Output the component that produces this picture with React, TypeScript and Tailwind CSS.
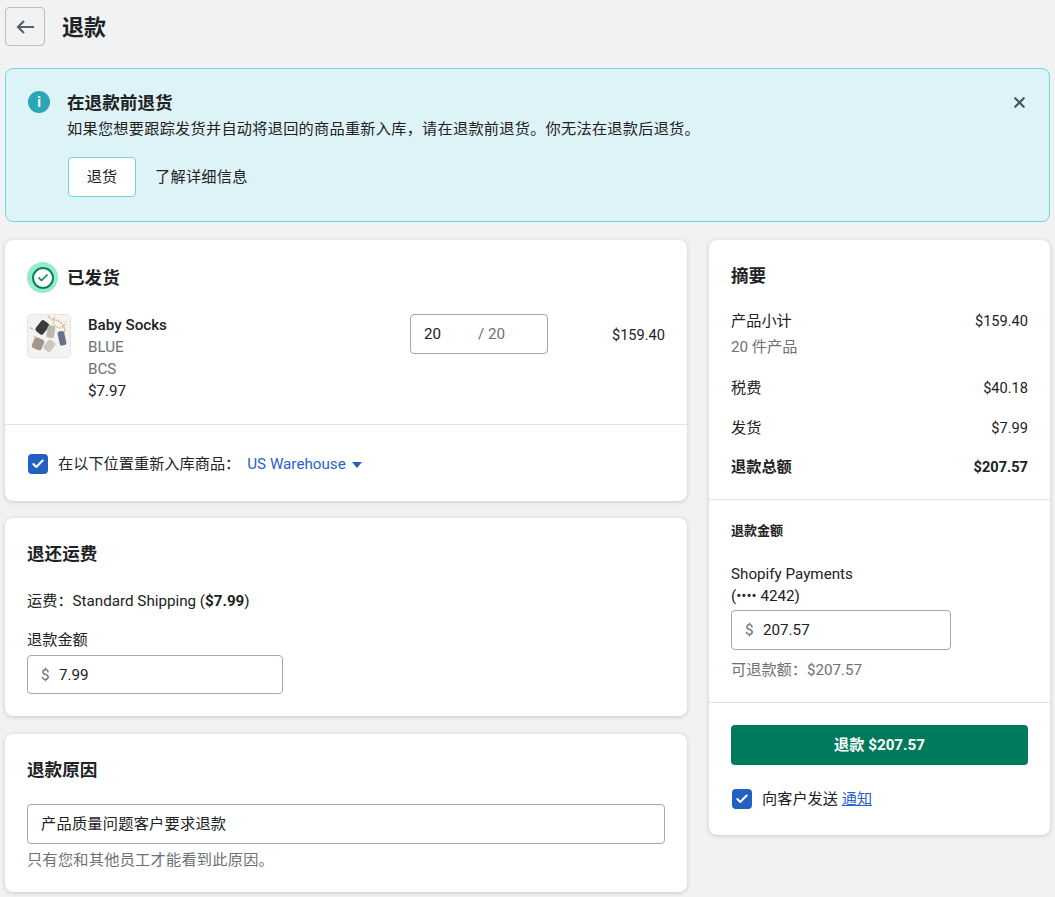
import { Check, X } from 'lucide-react';

const font = '[font-family:Roboto,"Noto_Sans_CJK_SC",sans-serif]';

function Checkbox() {
  return (
    <span className="flex h-5 w-5 shrink-0 items-center justify-center rounded-[4px] bg-[#2360c0]">
      <Check className="h-3.5 w-3.5 text-white" strokeWidth={3.5} />
    </span>
  );
}

function MoneyInput({ value, className }: { value: string; className: string }) {
  return (
    <div className={`flex items-center rounded-[4px] border border-[#a5a7ab] bg-white pl-[13px] ${className}`}>
      <span className="w-[18px] text-[#6a6f85]">$</span>
      <span>{value}</span>
    </div>
  );
}

function SummaryRow({ label, value, bold }: { label: string; value: string; bold?: boolean }) {
  return (
    <div className={`flex items-center justify-between ${bold ? 'font-bold' : ''}`}>
      <span>{label}</span>
      <span className="text-[14.6px]">{value}</span>
    </div>
  );
}

function Thumbnail() {
  return (
    <svg viewBox="0 0 44 44" className="h-11 w-11 shrink-0 rounded-[4px] border border-[#e3e4e6]">
      <rect width="44" height="44" fill="#f4f3f1" />
      <path d="M21 1c4 5 8 3 12 6s7 8 5 12" fill="none" stroke="#dcae80" strokeWidth="1.6" strokeDasharray="2 1" />
      <path d="M28 2c-3 4-2 9 3 11s7-2 9-6" fill="none" stroke="#dfb891" strokeWidth="1.3" strokeDasharray="2 1" />
      <path d="M2 13l3 2M6 22l2 1" stroke="#d9a57a" strokeWidth="1.2" />
      <rect x="10" y="6" width="10" height="14" rx="2.5" transform="rotate(38 15 13)" fill="#3a3b3f" />
      <rect x="20" y="11" width="8" height="13" rx="2" transform="rotate(8 24 17)" fill="#bdb9ac" />
      <rect x="32" y="17" width="7" height="15" rx="2" transform="rotate(-12 35 24)" fill="#67728a" />
      <rect x="5" y="24" width="11" height="12" rx="3" transform="rotate(22 10 30)" fill="#a3978c" />
      <rect x="18" y="26" width="9" height="12" rx="3" transform="rotate(38 22 32)" fill="#cbc8bf" />
    </svg>
  );
}

function ShippedIcon() {
  return (
    <span className="flex h-[31px] w-[31px] items-center justify-center rounded-full bg-[#96ecc8]">
      <span className="flex h-[22px] w-[22px] items-center justify-center rounded-full border-2 border-[#108060] bg-white">
        <Check className="h-3 w-3 text-[#108060]" strokeWidth={3.5} />
      </span>
    </span>
  );
}

export default function App() {
  return (
    <div className={`h-[897px] overflow-hidden bg-[#f1f2f4] pl-[5px] pr-[5px] text-[15.2px] leading-[22px] text-[#202223] ${font}`}>
      {/* Header */}
      <div className="flex items-center gap-[17px] pt-[7px]">
        <button className="flex h-[39px] w-10 items-center justify-center rounded-[4px] border border-[#babfc3] bg-transparent">
          <svg viewBox="0 0 18 14" className="h-[14px] w-[18px] text-[#5c5f62]" fill="none" stroke="currentColor" strokeWidth="2.2">
            <path d="M18 7H2M8 1 2 7l6 6" />
          </svg>
        </button>
        <h1 className="mt-0.5 text-[22px] font-bold leading-7">退款</h1>
      </div>

      {/* Banner */}
      <div className="relative mt-[22px] flex h-[154px] gap-[17px] rounded-lg border border-[#6fd8d8] bg-[#def3f7] pl-[22px] pt-[22px]">
        <span className="flex h-[22px] w-[22px] shrink-0 items-center justify-center rounded-full bg-[#2ba6b8] text-[14px] font-bold leading-none text-white">i</span>
        <div>
          <h2 className="text-[17.6px] font-bold leading-6">在退款前退货</h2>
          <p className="mt-[3px] tracking-[0.25px]">如果您想要跟踪发货并自动将退回的商品重新入库，请在退款前退货。你无法在退款后退货。</p>
          <div className="ml-px mt-[17px] flex items-center gap-[19px]">
            <button className="h-10 w-[68px] rounded-[4px] border border-[#6fd8d8] bg-white">退货</button>
            <span className="tracking-[0.25px]">了解详细信息</span>
          </div>
        </div>
        <X className="absolute right-[21px] top-[25px] h-[17px] w-[17px] text-[#4a5358]" strokeWidth={3} />
      </div>

      <div className="mt-[18px] flex items-start gap-[22px]">
        {/* Left column */}
        <div className="flex w-[682px] shrink-0 flex-col">
          <section className="h-[261px] rounded-lg bg-white shadow-[0_1px_4px_rgba(22,29,37,0.2)]">
            <div className="h-[185px] border-b border-[#e1e3e5] px-[22px] pt-[22px]">
              <div className="flex items-center gap-[9px]">
                <ShippedIcon />
                <h2 className="text-[17.6px] font-bold">已发货</h2>
              </div>
              <div className="mt-[21px] flex items-start">
                <Thumbnail />
                <div className="ml-[17px] w-[322px] shrink-0">
                  <div className="font-medium">Baby Socks</div>
                  <div className="text-[#6d7175]">BLUE</div>
                  <div className="text-[#6d7175]">BCS</div>
                  <div>$7.97</div>
                </div>
                <div className="flex h-10 w-[138px] shrink-0 items-center rounded-[4px] border border-[#a5a7ab] pl-[13px]">
                  <span className="w-[54px]">20</span>
                  <span className="text-[#6d7175]">/ 20</span>
                </div>
                <div className="ml-auto pt-[10px] text-[14.6px]">$159.40</div>
              </div>
            </div>
            <div className="flex items-center pl-[23px] pt-[28px]">
              <Checkbox />
              <span className="ml-[10px]">在以下位置重新入库商品：</span>
              <span className="ml-[7px] text-[#2a62c8]">US Warehouse</span>
              <svg viewBox="0 0 10 6" className="ml-[6px] mt-px h-[6px] w-[10px] text-[#2360c0]">
                <path d="M0 0h10L5 6z" fill="currentColor" />
              </svg>
            </div>
          </section>

          <section className="mt-[17px] h-[198px] rounded-lg bg-white px-[22px] pt-[22px] shadow-[0_1px_4px_rgba(22,29,37,0.2)]">
            <h2 className="text-[17.6px] font-bold leading-7">退还运费</h2>
            <p className="mt-[22px]">运费：Standard Shipping (<b>$7.99</b>)</p>
            <p className="mt-[17px]">退款金额</p>
            <MoneyInput value="7.99" className="mt-[4px] h-[39px] w-[256px]" />
          </section>

          <section className="mt-[18px] h-[158px] rounded-lg bg-white px-[22px] pt-[22px] shadow-[0_1px_4px_rgba(22,29,37,0.2)]">
            <h2 className="text-[17.6px] font-bold leading-7">退款原因</h2>
            <div className="mt-[20px] flex h-10 items-center rounded-[4px] border border-[#a5a7ab] pl-[13px] tracking-[0.25px]">产品质量问题客户要求退款</div>
            <p className="mt-[5px] tracking-[0.25px] text-[#6d7175]">只有您和其他员工才能看到此原因。</p>
          </section>
        </div>

        {/* Summary */}
        <aside className="h-[595px] flex-1 rounded-lg bg-white shadow-[0_1px_4px_rgba(22,29,37,0.2)]">
          <div className="h-[260px] border-b border-[#e1e3e5] px-[22px] pt-[22px]">
            <h2 className="text-[17.6px] font-bold leading-7">摘要</h2>
            <div className="mt-[20px]"><SummaryRow label="产品小计" value="$159.40" /></div>
            <div className="mt-1 text-[#6d7175]">20 件产品</div>
            <div className="mt-[19px] flex flex-col gap-[17.5px]">
              <SummaryRow label="税费" value="$40.18" />
              <SummaryRow label="发货" value="$7.99" />
              <SummaryRow label="退款总额" value="$207.57" bold />
            </div>
          </div>
          <div className="h-[203px] border-b border-[#e1e3e5] px-[22px] pt-[20px]">
            <h3 className="text-[13px] font-bold leading-[22px]">退款金额</h3>
            <div className="mt-[21px]">Shopify Payments</div>
            <div>(•••• 4242)</div>
            <MoneyInput value="207.57" className="mt-[3px] h-10 w-[220px]" />
            <p className="mt-[9px] text-[#6d7175]">可退款额：$207.57</p>
          </div>
          <div className="px-[22px] pt-[22px]">
            <button className="h-10 w-full rounded-[4px] bg-[#007a5c] font-bold text-white">退款 $207.57</button>
            <div className="ml-px mt-[23px] flex items-center gap-[10px]">
              <Checkbox />
              <span>向客户发送 <span className="text-[#2a62c8] underline">通知</span></span>
            </div>
          </div>
        </aside>
      </div>
    </div>
  );
}
